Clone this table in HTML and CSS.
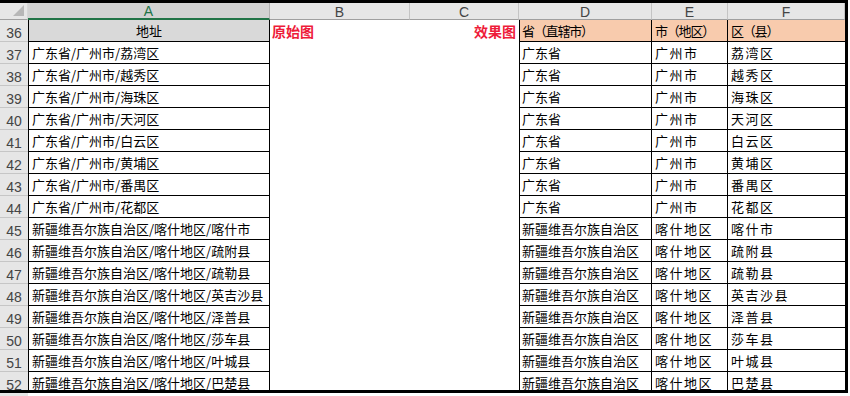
FILE: index.html
```html
<!DOCTYPE html>
<html lang="zh-CN">
<head>
<meta charset="utf-8">
<title>Sheet</title>
<link rel="stylesheet" href="styles.css">
</head>
<body>
<div class="window">
  <div class="viewport">
    <div class="sheet">
      <div class="ch corner"><span class="tri"></span></div>
      <div class="ch ch-sel">A</div>
      <div class="ch">B</div>
      <div class="ch">C</div>
      <div class="ch">D</div>
      <div class="ch">E</div>
      <div class="ch">F</div>

      <div class="rh">36</div>
      <div class="c a hdr-gray center">地址</div>
      <div class="c note">原始图</div>
      <div class="c note right">效果图</div>
      <div class="c d hdr-peach tight">省（直辖市）</div>
      <div class="c e hdr-peach tight">市（地区）</div>
      <div class="c f hdr-peach tight">区（县）</div>

      <div class="rh">37</div><div class="c a">广东省/广州市/荔湾区</div><div class="c"></div><div class="c"></div><div class="c d">广东省</div><div class="c e sp">广州市</div><div class="c f sp">荔湾区</div>
      <div class="rh">38</div><div class="c a">广东省/广州市/越秀区</div><div class="c"></div><div class="c"></div><div class="c d">广东省</div><div class="c e sp">广州市</div><div class="c f sp">越秀区</div>
      <div class="rh">39</div><div class="c a">广东省/广州市/海珠区</div><div class="c"></div><div class="c"></div><div class="c d">广东省</div><div class="c e sp">广州市</div><div class="c f sp">海珠区</div>
      <div class="rh">40</div><div class="c a">广东省/广州市/天河区</div><div class="c"></div><div class="c"></div><div class="c d">广东省</div><div class="c e sp">广州市</div><div class="c f sp">天河区</div>
      <div class="rh">41</div><div class="c a">广东省/广州市/白云区</div><div class="c"></div><div class="c"></div><div class="c d">广东省</div><div class="c e sp">广州市</div><div class="c f sp">白云区</div>
      <div class="rh">42</div><div class="c a">广东省/广州市/黄埔区</div><div class="c"></div><div class="c"></div><div class="c d">广东省</div><div class="c e sp">广州市</div><div class="c f sp">黄埔区</div>
      <div class="rh">43</div><div class="c a">广东省/广州市/番禺区</div><div class="c"></div><div class="c"></div><div class="c d">广东省</div><div class="c e sp">广州市</div><div class="c f sp">番禺区</div>
      <div class="rh">44</div><div class="c a">广东省/广州市/花都区</div><div class="c"></div><div class="c"></div><div class="c d">广东省</div><div class="c e sp">广州市</div><div class="c f sp">花都区</div>
      <div class="rh">45</div><div class="c a">新疆维吾尔族自治区/喀什地区/喀什市</div><div class="c"></div><div class="c"></div><div class="c d">新疆维吾尔族自治区</div><div class="c e sp">喀什地区</div><div class="c f sp">喀什市</div>
      <div class="rh">46</div><div class="c a">新疆维吾尔族自治区/喀什地区/疏附县</div><div class="c"></div><div class="c"></div><div class="c d">新疆维吾尔族自治区</div><div class="c e sp">喀什地区</div><div class="c f sp">疏附县</div>
      <div class="rh">47</div><div class="c a">新疆维吾尔族自治区/喀什地区/疏勒县</div><div class="c"></div><div class="c"></div><div class="c d">新疆维吾尔族自治区</div><div class="c e sp">喀什地区</div><div class="c f sp">疏勒县</div>
      <div class="rh">48</div><div class="c a">新疆维吾尔族自治区/喀什地区/英吉沙县</div><div class="c"></div><div class="c"></div><div class="c d">新疆维吾尔族自治区</div><div class="c e sp">喀什地区</div><div class="c f sp">英吉沙县</div>
      <div class="rh">49</div><div class="c a">新疆维吾尔族自治区/喀什地区/泽普县</div><div class="c"></div><div class="c"></div><div class="c d">新疆维吾尔族自治区</div><div class="c e sp">喀什地区</div><div class="c f sp">泽普县</div>
      <div class="rh">50</div><div class="c a">新疆维吾尔族自治区/喀什地区/莎车县</div><div class="c"></div><div class="c"></div><div class="c d">新疆维吾尔族自治区</div><div class="c e sp">喀什地区</div><div class="c f sp">莎车县</div>
      <div class="rh">51</div><div class="c a">新疆维吾尔族自治区/喀什地区/叶城县</div><div class="c"></div><div class="c"></div><div class="c d">新疆维吾尔族自治区</div><div class="c e sp">喀什地区</div><div class="c f sp">叶城县</div>
      <div class="rh">52</div><div class="c a">新疆维吾尔族自治区/喀什地区/巴楚县</div><div class="c"></div><div class="c"></div><div class="c d">新疆维吾尔族自治区</div><div class="c e sp">喀什地区</div><div class="c f sp">巴楚县</div>
    </div>
  </div>
</div>
<div class="below"><div class="below-rh"></div></div>
</body>
</html>
```
FILE: styles.css
```css
html, body {
  margin: 0;
  padding: 0;
  background: #ffffff;
}
body {
  width: 850px;
  height: 396px;
  overflow: hidden;
  font-family: "Noto Sans CJK SC", "Noto Sans", sans-serif;
}
.window {
  width: 848px;
  box-sizing: border-box;
  border-top: 3px solid #000;
  border-right: 3px solid #000;
  border-bottom: 3px solid #000;
}
.viewport {
  height: 387px;
  overflow: hidden;
}
.sheet {
  display: grid;
  grid-template-columns: 28px 242px 140px 109px 133px 76px 117px;
  grid-template-rows: 17px 21.7px;
  grid-auto-rows: 22px;
}
.ch {
  box-sizing: border-box;
  background: #e6e6e6;
  border-right: 1px solid #c4c4c4;
  border-bottom: 1px solid #9f9f9f;
  display: flex;
  align-items: center;
  justify-content: center;
  font-family: "Liberation Sans", Arial, sans-serif;
  font-size: 14px;
  color: #444;
  line-height: 16px;
  padding-top: 1px;
}
.ch:last-child { border-right: 0; }
.corner {
  justify-content: flex-end;
  align-items: flex-end;
  padding: 0 3px 3px 0;
  border-right: 1px solid #d6d6d6;
}
.tri {
  width: 0;
  height: 0;
  border-left: 11px solid transparent;
  border-bottom: 11px solid #b7b7b7;
}
.ch-sel {
  background: #d2d2d2;
  color: #217346;
  border-bottom: 2px solid #217346;
  border-right-color: #b0b0b0;
}
.rh {
  box-sizing: border-box;
  background: #e6e6e6;
  border-bottom: 1px solid #c6c6c6;
  display: flex;
  align-items: center;
  justify-content: center;
  font-family: "Liberation Sans", Arial, sans-serif;
  font-size: 14px;
  color: #444;
  line-height: 16px;
  padding-top: 6px;
}
.c {
  box-sizing: border-box;
  display: flex;
  align-items: center;
  padding: 2px 0 0 3px;
  font-size: 13px;
  line-height: 18px;
  color: #000;
  white-space: nowrap;
  overflow: hidden;
}
.a {
  border-left: 1px solid #000;
  border-right: 1px solid #000;
  border-bottom: 1px solid #000;
  padding-left: 3px;
}
.d {
  border-left: 1px solid #000;
  border-right: 1px solid #000;
  border-bottom: 1px solid #000;
  padding-left: 2px;
}
.e {
  border-right: 1px solid #000;
  border-bottom: 1px solid #000;
  padding-left: 3px;
}
.f {
  border-bottom: 1px solid #000;
  padding-left: 3px;
}
.sp { letter-spacing: 1.5px; }
.center { justify-content: center; padding-left: 0; }
.hdr-gray { background: #d9d9d9; }
.hdr-peach { background: #f8cbad; }
.tight {
  letter-spacing: -1.2px;
}
.note {
  color: #ee1c3a;
  font-weight: bold;
  font-size: 14px;
  padding: 0 0 0 2px;
}
.right {
  justify-content: flex-end;
  padding: 0 3px 0 0;
}
.below {
  height: 3px;
  display: flex;
}
.below-rh {
  width: 28px;
  background: #e6e6e6;
}
```
